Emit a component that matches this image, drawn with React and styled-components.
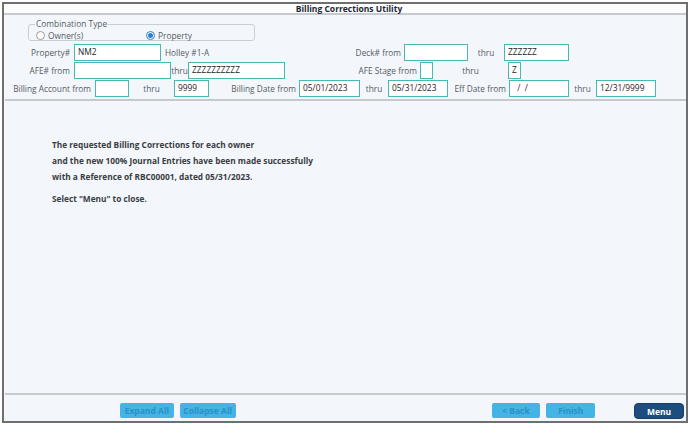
import React from 'react';
import styled, { createGlobalStyle } from 'styled-components';

const Global = createGlobalStyle`
  html, body { margin: 0; padding: 0; background: #ffffff; }
  body { font-family: "Open Sans", "Noto Sans", sans-serif; }
  * { box-sizing: border-box; }
`;

const Frame = styled.div`
  margin: 2px 0 0 2px;
  width: 686px;
  height: 421px;
  border: 2px solid #6f6f6f;
  background: #f3f7fc;
  display: flex;
  flex-direction: column;
`;

const TitleBar = styled.div`
  height: 11px;
  line-height: 10px;
  background: #fbfdff;
  border-bottom: 2px solid #c6c9cd;
  text-align: center;
  font-weight: 700;
  font-size: 8.5px;
  color: #1c2632;
  padding-left: 8px;
`;

const Filters = styled.div`
  display: flex;
  flex-direction: column;
  padding-top: 4px;
`;

const Group = styled.fieldset`
  margin: 0 0 0 24px;
  width: 227px;
  padding: 0 0 0 7px;
  border: 1px solid #c9ced5;
  border-radius: 3px;
  min-width: 0;
`;

const Legend = styled.legend`
  padding: 0 1px;
  margin-left: -1px;
  font-size: 8.4px;
  line-height: 10px;
  color: #555b62;
`;

const RadioRow = styled.div`
  display: flex;
  height: 11px;
  align-items: center;
  padding-top: 1px;
`;

const RadioItem = styled.label`
  display: flex;
  align-items: center;
  gap: 3px;
  width: ${p => p.$w}px;
  font-size: 8.4px;
  color: #555b62;
`;

const Circle = styled.span`
  width: 9px;
  height: 9px;
  border-radius: 50%;
  border: 1px solid ${p => (p.$on ? '#2e7fd6' : '#9a9a9a')};
  background: #fff;
  display: flex;
  align-items: center;
  justify-content: center;
  &::after {
    content: '';
    width: 5px;
    height: 5px;
    border-radius: 50%;
    background: ${p => (p.$on ? '#2e7fd6' : 'transparent')};
  }
`;

const Row = styled.div`
  display: flex;
  align-items: center;
  height: 17px;
  margin-top: ${p => p.$mt || 1}px;
`;

const Label = styled.span`
  width: ${p => p.$w}px;
  text-align: ${p => p.$align || 'right'};
  font-size: 8.3px;
  color: #555b62;
  white-space: nowrap;
  flex: none;
`;

const NameText = styled(Label)`
  padding-left: 4px;
  text-align: left;
`;

const Input = styled.div`
  width: ${p => p.$w}px;
  height: ${p => p.$h || 17}px;
  margin-left: ${p => p.$ml || 0}px;
  border: 1.5px solid #4ab8b2;
  background: #ffffff;
  font-size: 8.4px;
  line-height: 14px;
  padding-left: 3px;
  color: #1e1e1e;
  white-space: pre;
  flex: none;
`;

const Divider = styled.div`
  height: 2px;
  margin: ${p => p.$m || '0'};
  background: #c7cacd;
`;

const Content = styled.div`
  flex: 1;
  padding: 36px 0 0 48px;
`;

const Message = styled.p`
  margin: 0 0 ${p => p.$mb || 0}px 0;
  font-size: 8.3px;
  line-height: 16px;
  font-weight: 700;
  color: #3a3d42;
`;

const Footer = styled.div`
  height: 26px;
  display: flex;
  align-items: flex-start;
  padding: 8px 2px 0 116px;
  gap: 6px;
`;

const Button = styled.button`
  width: ${p => p.$w}px;
  height: 15px;
  margin-left: ${p => p.$ml || 0}px;
  border: none;
  border-radius: 2px;
  background: #43b4e5;
  color: #2c8fc6;
  font-family: inherit;
  font-size: 8.5px;
  font-weight: 700;
  padding: 0;
  line-height: 15px;
`;

const MenuButton = styled(Button)`
  height: 16px;
  border-radius: 4px;
  background: #1d4d7e;
  border: 1px solid #163d66;
  color: #ffffff;
  line-height: 13px;
`;

export default function App() {
  return (
    <>
      <Global />
      <Frame>
        <TitleBar>Billing Corrections Utility</TitleBar>
        <Filters>
          <Group>
            <Legend>Combination Type</Legend>
            <RadioRow>
              <RadioItem $w={110}><Circle />Owner(s)</RadioItem>
              <RadioItem $w={80}><Circle $on />Property</RadioItem>
            </RadioRow>
          </Group>
          <Row $mt={3}>
            <Label $w={66}>Property#</Label>
            <Input $w={87} $ml={4}>NM2</Input>
            <NameText $w={190}>Holley #1-A</NameText>
            <Label $w={50}>Deck# from</Label>
            <Input $w={64} $ml={3} />
            <Label $w={36} $align="center">thru</Label>
            <Input $w={65}>ZZZZZZ</Input>
          </Row>
          <Row $mt={1}>
            <Label $w={66}>AFE# from</Label>
            <Input $w={97} $ml={4} />
            <Label $w={17} $align="center">thru</Label>
            <Input $w={97}>ZZZZZZZZZZ</Input>
            <Label $w={132}>AFE Stage from</Label>
            <Input $w={13} $ml={3} />
            <Label $w={75} $align="center">thru</Label>
            <Input $w={13}>Z</Input>
          </Row>
          <Row $mt={1}>
            <Label $w={87}>Billing Account from</Label>
            <Input $w={34} $ml={4} />
            <Label $w={45} $align="center">thru</Label>
            <Input $w={35}>9999</Input>
            <Label $w={87}>Billing Date from</Label>
            <Input $w={61} $ml={3}>05/01/2023</Input>
            <Label $w={28} $align="center">thru</Label>
            <Input $w={60}>05/31/2023</Input>
            <Label $w={58}>Eff Date from</Label>
            <Input $w={60} $ml={3}>{'  /  /'}</Input>
            <Label $w={27} $align="center">thru</Label>
            <Input $w={60}>12/31/9999</Input>
          </Row>
          <Divider $m="2px 0 0 1px" />
        </Filters>
        <Content>
          <Message>The requested Billing Corrections for each owner</Message>
          <Message>and the new 100% Journal Entries have been made successfully</Message>
          <Message $mb={6}>with a Reference of RBC00001, dated 05/31/2023.</Message>
          <Message>Select "Menu" to close.</Message>
        </Content>
        <Divider $m="0 0 0 1px" />
        <Footer>
          <Button $w={54}>Expand All</Button>
          <Button $w={56}>Collapse All</Button>
          <Button $w={49} $ml={250}>&lt; Back</Button>
          <Button $w={49}>Finish</Button>
          <MenuButton $w={50} $ml={33}>Menu</MenuButton>
        </Footer>
      </Frame>
    </>
  );
}
